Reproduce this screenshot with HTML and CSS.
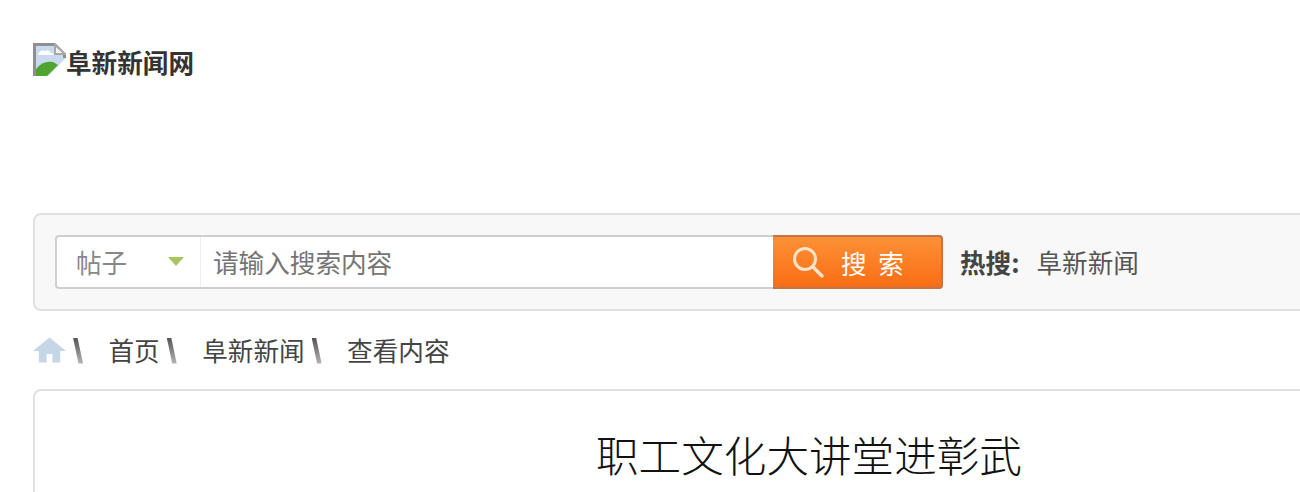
FILE: index.html
```html
<!DOCTYPE html>
<html lang="zh-CN">

<head>
    <meta charset="UTF-8">
    <title>职工文化大讲堂进彰武</title>
    <link rel="stylesheet" href="styles.css">
</head>

<body>
    <div class="wrap">
        <div class="logo">
            <svg class="logo-img" width="33" height="33" viewBox="0 0 33 33">
                <path d="M0 0H22L33 11V15L15 33H0Z" fill="#c9d9ee"/>
                <path d="M5 11q2-5 7-3 4-2 6 2 3 0 3 2H5Z" fill="#fff"/>
                <path d="M3 33V26Q10 17 20 19L25 22L14 33Z" fill="#4fa32f"/>
                <path d="M1.500 33V1.500H21.500L31.500 11.500V15" fill="none" stroke="#8f8f8f" stroke-width="3"/>
                <path d="M22 2V11H32Z" fill="#f4f4f4" stroke="#a8a8a8" stroke-width="2"/>
            </svg>
            <span>阜新新闻网</span>
        </div>

        <div class="search-bar">
            <div class="search-box">
                <div class="search-type">
                    <span>帖子</span>
                    <i class="arrow"></i>
                </div>
                <div class="search-input">请输入搜索内容</div>
                <button class="search-btn" type="button">
                    <svg width="34" height="34" viewBox="0 0 34 34">
                        <circle cx="14" cy="14" r="10.500" fill="none" stroke="#fde3c8" stroke-width="3"/>
                        <path d="M22 22L31 31" stroke="#fde3c8" stroke-width="3.500" stroke-linecap="round"/>
                    </svg>
                    <span>搜 索</span>
                </button>
            </div>
            <div class="hot"><b>热搜:</b><a>阜新新闻</a></div>
        </div>

        <div class="crumbs">
            <svg class="home" width="33" height="28" viewBox="0 0 34 28">
                <path d="M17 1L34 15H28V27H20V18H14V27H6V15H0Z" fill="#c5d6e6"/>
            </svg>
            <i class="sep"></i>
            <a>首页</a>
            <i class="sep"></i>
            <a>阜新新闻</a>
            <i class="sep"></i>
            <a>查看内容</a>
        </div>

        <div class="content">
            <h1>职工文化大讲堂进彰武</h1>
        </div>
    </div>
</body>

</html>
```

FILE: styles.css
```css
* {
    margin: 0;
    padding: 0;
    box-sizing: border-box;
}

html,
body {
    height: 492px;
    overflow: hidden;
}

body {
    font-family: "Noto Sans CJK SC", "Liberation Sans", sans-serif;
    font-size: 25.6px;
    color: #333;
    background-color: #fff;
}

.wrap {
    width: 1552px;
    margin-left: 33px;
}

/* Logo */
.logo {
    display: flex;
    align-items: flex-start;
    height: 213px;
    padding-top: 43px;
    font-weight: 700;
    line-height: 37px;
}

.logo-img {
    flex-shrink: 0;
}

/* Search */
.search-bar {
    display: flex;
    align-items: center;
    height: 98px;
    padding-left: 20px;
    background-color: #f8f8f8;
    border: 2px solid #e0e0e0;
    border-radius: 8px;
}

.search-box {
    display: flex;
    width: 888px;
    height: 54px;
    background-color: #fff;
    border: 2px solid #cfcfcf;
    border-right: none;
    border-radius: 4px;
}

.search-type {
    display: flex;
    align-items: center;
    justify-content: space-between;
    width: 144px;
    padding: 0 16px 2px 19px;
    color: #888;
    border-right: 1px solid #eee;
}

.arrow {
    width: 0;
    height: 0;
    border-top: 9px solid #a4c661;
    border-left: 8px solid transparent;
    border-right: 8px solid transparent;
}

.search-input {
    flex: 1;
    display: flex;
    align-items: center;
    padding: 0 0 2px 12px;
    color: #757575;
}

.search-btn {
    display: flex;
    align-items: center;
    width: 170px;
    height: 54px;
    margin: -2px 0;
    padding-left: 18px;
    gap: 16px;
    font: inherit;
    word-spacing: 6px;
    color: #fff;
    background: linear-gradient(#fd9136, #f96d14);
    border: 2px solid #c4734a;
    border-left: none;
    border-radius: 0 4px 4px 0;
}

.hot {
    display: flex;
    margin-left: 17px;
    padding-bottom: 2px;
    color: #555;
}

.hot b {
    margin-right: 17px;
    color: #444;
}

/* Breadcrumb */
.crumbs {
    display: flex;
    align-items: center;
    height: 78px;
    padding-bottom: 1px;
    color: #444;
}

.home {
    flex-shrink: 0;
}

.sep {
    width: 10px;
    height: 26px;
    margin: 2px 0 0 7px;
    background: linear-gradient(#555, #b5b5b5);
    clip-path: polygon(0 0, 45% 0, 100% 100%, 55% 100%);
}

.crumbs a {
    margin-left: 25.500px;
}

/* Article */
.content {
    height: 300px;
    padding-top: 33px;
    border: 2px solid #e0e0e0;
    border-radius: 8px;
}

h1 {
    font-size: 42.6px;
    font-weight: 300;
    line-height: 60px;
    color: #111;
    text-align: center;
}
```
